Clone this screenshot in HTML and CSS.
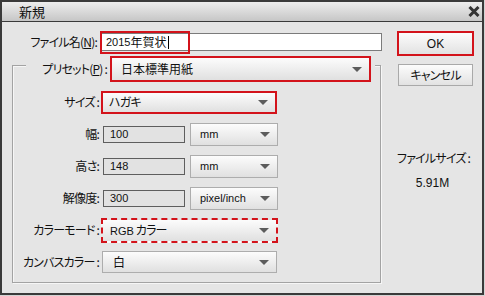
FILE: index.html
```html
<!DOCTYPE html>
<html lang="ja">
<head>
<meta charset="utf-8">
<title>新規</title>
<link rel="stylesheet" href="styles.css">
</head>
<body>
<div class="dialog">
  <div class="titlebar">
    <span class="title">新規</span>
    <svg class="close" width="12" height="11" viewBox="0 0 12 11"><path d="M1.5 1 L10.5 10 M10.5 1 L1.5 10" stroke="#333" stroke-width="3" fill="none"/></svg>
  </div>
  <div class="body">
    <div class="main">
      <div class="filerow">
        <span class="lbl jp">ファイル名(<u>N</u>):</span>
        <div class="namewrap">
          <div class="nameinput"><span class="num">2015</span>年賀状<span class="caret"></span></div>
          <span class="mark"></span>
        </div>
      </div>
      <div class="group">
        <div class="preset">
          <span class="plbl jp">プリセット(<u>P</u>) :</span>
          <div class="dd red preset-dd"><span>日本標準用紙</span><span class="arrow"></span></div>
        </div>
        <div class="grid">
          <span class="glbl jp">サイズ :</span>
          <div class="dd red size-dd"><span class="jp">ハガキ</span><span class="arrow"></span></div>

          <span class="glbl jp">幅:</span>
          <div class="field"><div class="num-in">100</div><div class="dd unit"><span class="lat">mm</span><span class="arrow"></span></div></div>

          <span class="glbl jp">高さ:</span>
          <div class="field"><div class="num-in">148</div><div class="dd unit"><span class="lat">mm</span><span class="arrow"></span></div></div>

          <span class="glbl jp">解像度:</span>
          <div class="field"><div class="num-in">300</div><div class="dd unit"><span class="lat">pixel/inch</span><span class="arrow"></span></div></div>

          <span class="glbl jp">カラーモード :</span>
          <div class="dd dashed"><span class="jp"><span class="lat">RGB</span> カラー</span><span class="arrow"></span></div>

          <span class="glbl jp">カンバスカラー :</span>
          <div class="dd canvas-dd"><span>白</span><span class="arrow"></span></div>
        </div>
      </div>
    </div>
    <div class="side">
      <div class="btn ok">OK</div>
      <div class="btn cancel jp">キャンセル</div>
      <div class="fsize jp">ファイルサイズ :</div>
      <div class="fsize-val">5.91M</div>
    </div>
  </div>
</div>
</body>
</html>
```
FILE: styles.css
```css
html, body {
  margin: 0;
  padding: 0;
  background: #d4d4d4;
}

.dialog {
  width: 484px;
  height: 295px;
  box-sizing: border-box;
  border: 2px solid #3a3a3a;
  background: #e5e5e5;
  display: flex;
  flex-direction: column;
  font-family: "Noto Sans CJK JP", sans-serif;
  font-size: 12px;
  line-height: 14px;
  color: #111;
  font-feature-settings: "palt";
}

.jp {
  letter-spacing: -0.8px;
  white-space: nowrap;
}

.titlebar {
  height: 19px;
  border-bottom: 1px solid #3a3a3a;
  background: linear-gradient(#ededed, #c6c6c6);
  display: flex;
  align-items: center;
  justify-content: space-between;
  padding: 0 2px 0 17px;
}

.title {
  font-size: 13px;
}

.close {
  display: block;
}

.body {
  display: flex;
  flex: 1;
}

.main {
  width: 380px;
  padding-top: 7px;
}

.filerow {
  display: flex;
  align-items: center;
  height: 26px;
}

.lbl {
  width: 95px;
  text-align: right;
}

.namewrap {
  position: relative;
  margin-left: 3px;
}

.nameinput {
  width: 282px;
  height: 18px;
  box-sizing: border-box;
  border: 1px solid #7b7b7b;
  background: #fff;
  display: flex;
  align-items: center;
  padding-left: 5px;
}

.num, .num-in, .lat, .fsize-val, .ok {
  font-family: "Liberation Sans", sans-serif;
  font-size: 11px;
  letter-spacing: 0;
}

.caret {
  display: inline-block;
  width: 1px;
  height: 13px;
  background: #000;
  margin-left: 1px;
}

.mark {
  position: absolute;
  left: 0;
  top: -2px;
  width: 90px;
  height: 23px;
  box-sizing: border-box;
  border: 2px solid #d3131b;
}

.group {
  margin: 10px 0 0 10px;
  width: 369px;
  box-sizing: border-box;
  border: 1px solid #a3a3a3;
  box-shadow: inset 1px 1px 0 #f6f6f6, 1px 1px 0 #f6f6f6;
  padding-bottom: 4px;
}

.preset {
  display: flex;
  align-items: center;
  width: max-content;
  height: 26px;
  margin: -10px 0 0 13px;
  padding-right: 4px;
  background: #e5e5e5;
}

.plbl {
  width: 81px;
  text-align: right;
  margin-right: 3px;
}

.grid {
  margin-top: 4px;
  display: grid;
  grid-template-columns: 86px auto;
  grid-auto-rows: 32px;
  align-items: center;
  column-gap: 2px;
}

.glbl {
  text-align: right;
}

.dd {
  display: flex;
  align-items: center;
  justify-content: space-between;
  box-sizing: border-box;
  border: 1px solid #adadad;
  background: linear-gradient(#fcfcfc, #e0e0e0);
  padding: 0 7px 0 9px;
}

.arrow {
  width: 0;
  height: 0;
  border-left: 5px solid transparent;
  border-right: 5px solid transparent;
  border-top: 5px solid #5c5c5c;
}

.red {
  border: 2px solid #d3131b;
}

.preset-dd {
  width: 261px;
  height: 26px;
}

.size-dd {
  width: 176px;
  height: 23px;
  padding-left: 6px;
}

.field {
  display: flex;
  align-items: center;
}

.num-in {
  margin-left: 2px;
  width: 82px;
  height: 17px;
  box-sizing: border-box;
  border: 1px solid #5e5e5e;
  background: #e2e2e2;
  display: flex;
  align-items: center;
  padding-left: 6px;
}

.unit {
  margin-left: 5px;
  width: 88px;
  height: 23px;
}

.dashed {
  width: 177px;
  height: 25px;
  border: 2px dashed #d3131b;
  padding-left: 7px;
}

.canvas-dd {
  margin-left: 1px;
  width: 175px;
  height: 22px;
  padding-left: 10px;
}

.side {
  margin-left: 15px;
  padding-top: 9px;
  width: 77px;
  display: flex;
  flex-direction: column;
  align-items: center;
}

.btn {
  box-sizing: border-box;
  display: flex;
  align-items: center;
  justify-content: center;
  background: linear-gradient(#fcfcfc, #e2e2e2);
}

.ok {
  width: 77px;
  height: 25px;
  border: 2px solid #d3131b;
  font-size: 12px;
}

.cancel {
  margin-top: 8px;
  width: 75px;
  height: 22px;
  border: 1px solid #a9a9a9;
}

.fsize {
  margin-top: 65px;
  margin-right: 4px;
}

.fsize-val {
  margin-top: 11px;
  margin-right: 6px;
  font-size: 12px;
}
```
